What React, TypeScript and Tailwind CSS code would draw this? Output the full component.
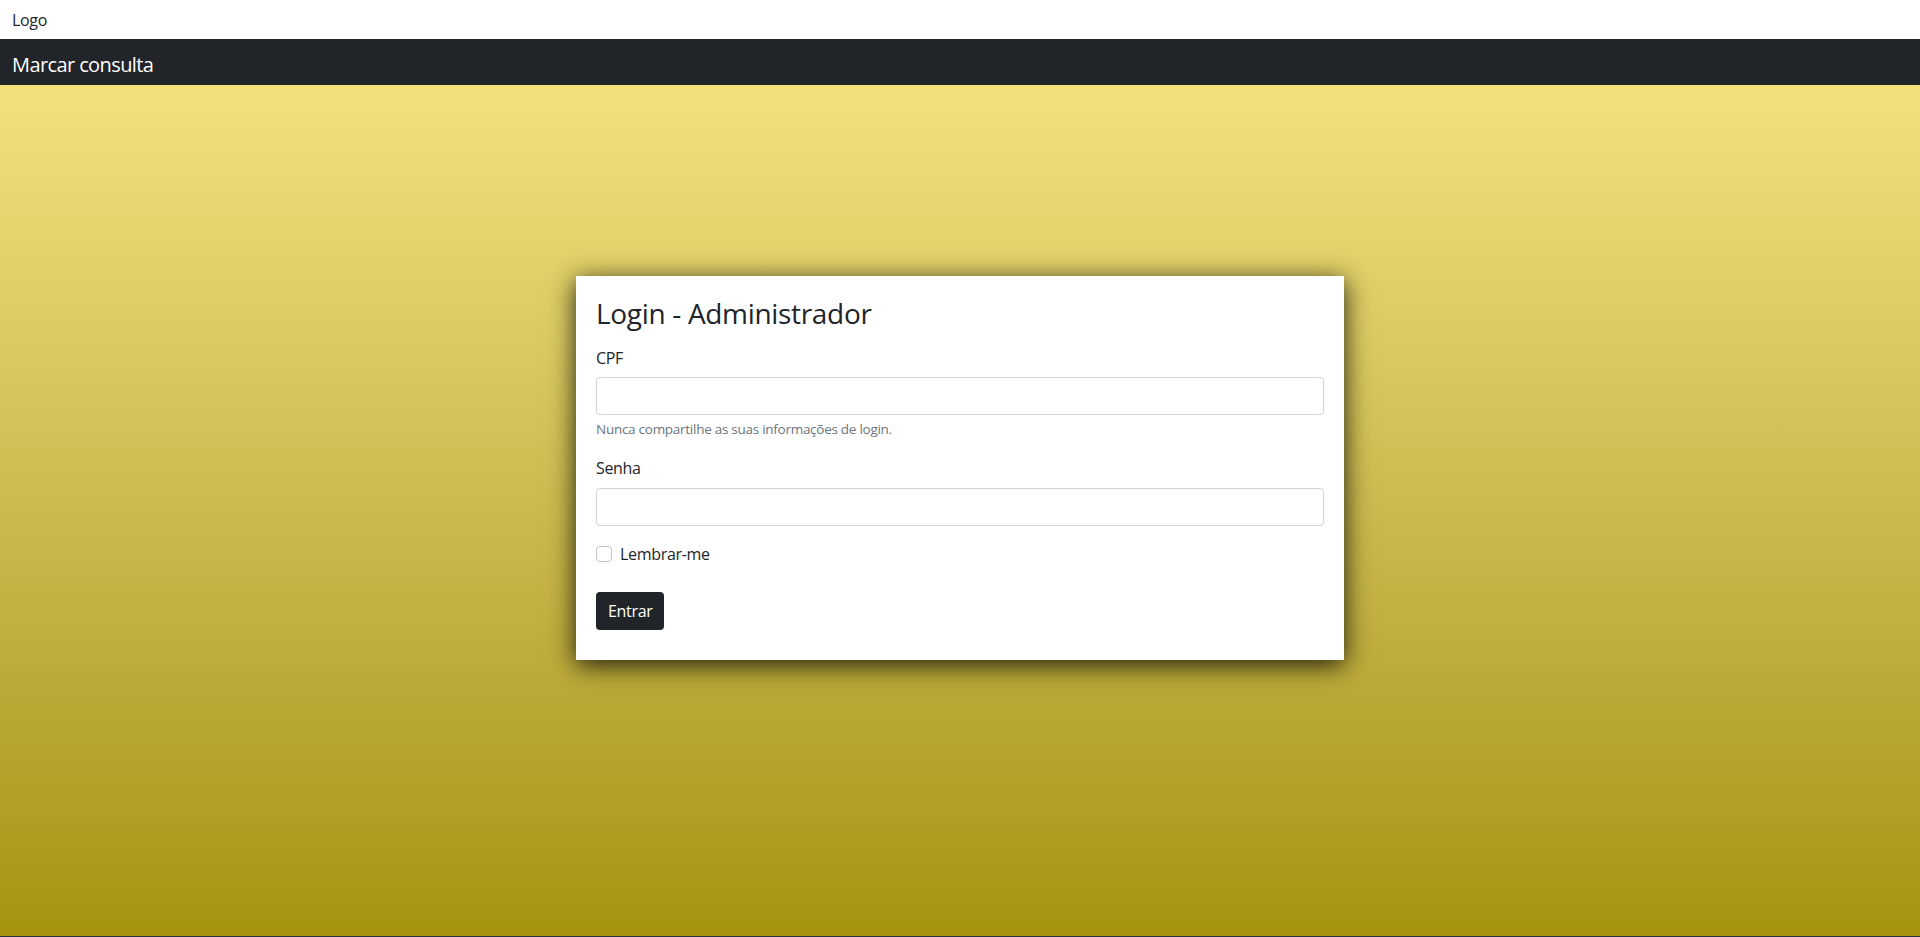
export default function App() {
  return (
    <div className="min-h-screen flex flex-col font-['Open_Sans',sans-serif] text-[#212529]">
      {/* Top bar */}
      <div className="h-[39px] bg-white flex items-center px-3">
        <span className="text-[16px] leading-6 tracking-[-0.02em] text-[#212529]">Logo</span>
      </div>

      {/* Navbar */}
      <nav className="h-[46px] bg-[#212529] flex items-center px-3 pt-[5px]">
        <span className="text-[20px] leading-[30px] tracking-[-0.03em] text-white">Marcar consulta</span>
      </nav>

      {/* Main */}
      <main className="h-[851px] bg-gradient-to-b from-[#f1e27c] to-[#a6930a] flex justify-center pt-[191px]">
        <div className="w-[768px] h-fit bg-white px-5 pt-5 pb-[30px] shadow-[0_5px_24px_rgba(0,0,0,0.85)] tracking-[-0.02em]">
          <h3 className="text-[28px] leading-[34px] mb-4">Login - Administrador</h3>

          <label htmlFor="cpf" className="block text-[16px] leading-6 mb-[7px]">
            CPF
          </label>
          <input
            id="cpf"
            type="text"
            className="block w-full h-[38px] border border-[#ced4da] rounded px-3"
          />
          <p className="mt-1 text-[13.5px] leading-[21px] tracking-[-0.02em] text-[#6c757d]">
            Nunca compartilhe as suas informações de login.
          </p>

          <label htmlFor="senha" className="block text-[16px] leading-6 mt-4 mb-2">
            Senha
          </label>
          <input
            id="senha"
            type="password"
            className="block w-full h-[38px] border border-[#ced4da] rounded px-3"
          />

          <div className="flex items-center gap-2 mt-4 h-6">
            <span className="w-4 h-4 border border-[#bfc4c9] rounded-[4px] bg-white" />
            <span className="text-[16px] leading-6">Lembrar-me</span>
          </div>

          <button className="mt-[26px] h-[38px] px-3 bg-[#212529] text-white text-[16px] rounded">
            Entrar
          </button>
        </div>
      </main>

      <footer className="h-[40px] bg-[#27333a]" />
    </div>
  );
}
